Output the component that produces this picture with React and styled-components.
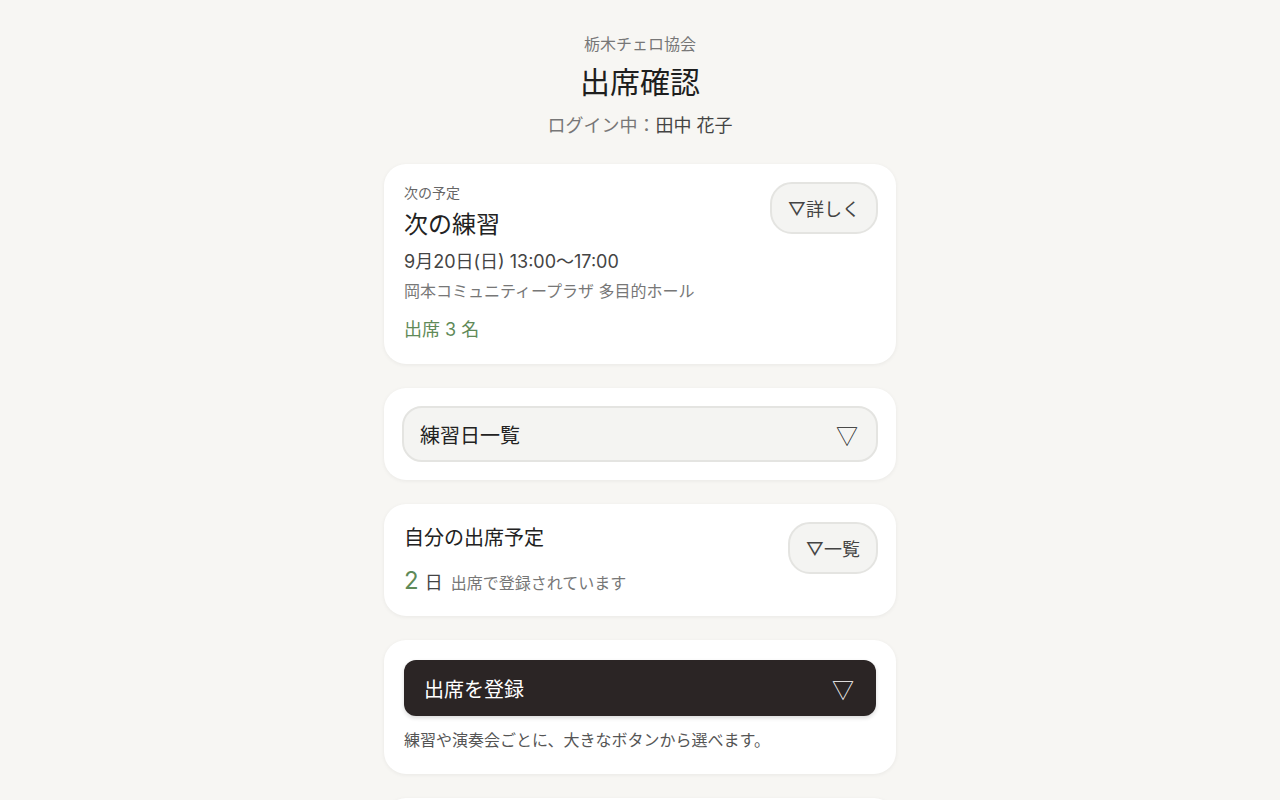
import styled, { createGlobalStyle } from "styled-components";

const GlobalStyle = createGlobalStyle`
  body {
    margin: 0;
    background: #f7f6f3;
    font-family: "Inter", "Noto Sans CJK JP", sans-serif;
    color: #222;
  }
`;

const Page = styled.div`
  width: 512px;
  margin: 0 auto;
  padding: 32px 0 24px;
`;

const Header = styled.header`
  text-align: center;
  margin-bottom: 25px;
`;

const Org = styled.div`
  font-size: 16px;
  line-height: 24px;
  color: #777;
`;

const Title = styled.h1`
  font-size: 30px;
  font-weight: 400;
  line-height: 42px;
  margin: 5px 0 10px;
  color: #1e1e1e;
`;

const Login = styled.div`
  font-size: 18px;
  line-height: 26px;
  color: #777;
  span {
    color: #444;
  }
`;

const Card = styled.section`
  background: #fff;
  border-radius: 22px;
  padding: ${(p) => p.$pad || "20px 20px 21px"};
  box-shadow: 0 1px 4px rgba(0, 0, 0, 0.06);
  margin-bottom: 24px;
`;

const Row = styled.div`
  display: flex;
  justify-content: space-between;
  align-items: flex-start;
`;

const Small = styled.div`
  font-size: 14px;
  line-height: 18px;
  color: #666;
`;

const CardTitle = styled.h2`
  font-size: ${(p) => p.$size || "24px"};
  font-weight: 400;
  line-height: ${(p) => (p.$size ? "28px" : "36px")};
  margin: ${(p) => (p.$size ? "0" : "5px 0 0")};
  color: #222;
`;

const DateText = styled.div`
  font-size: 18px;
  line-height: 26px;
  color: #444;
  margin-top: 6px;
`;

const Venue = styled.div`
  font-size: 16px;
  line-height: 24px;
  color: #777;
  margin-top: 4px;
`;

const Green = styled.div`
  font-size: 18px;
  line-height: 26px;
  color: #5f8a58;
  margin-top: 14px;
`;

const PillButton = styled.button`
  font-family: inherit;
  font-size: 18px;
  color: #444;
  background: #f4f4f2;
  border: 2px solid #e4e4e1;
  border-radius: 22px;
  height: 52px;
  padding: 0 16px;
  margin: -2px -2px 0 0;
  flex-shrink: 0;
`;

const Summary = styled.button`
  width: 100%;
  display: flex;
  align-items: center;
  justify-content: space-between;
  height: 56px;
  font-family: inherit;
  font-size: 20px;
  color: ${(p) => (p.$dark ? "#fff" : "#222")};
  background: ${(p) => (p.$dark ? "#2b2525" : "#f4f4f2")};
  border: ${(p) => (p.$dark ? "none" : "2px solid #e4e4e1")};
  border-radius: ${(p) => (p.$dark ? "12px" : "20px")};
  box-shadow: ${(p) => (p.$dark ? "0 2px 4px rgba(0,0,0,0.15)" : "none")};
  padding: ${(p) => (p.$dark ? "0 22px 0 20px" : "0 18px 0 16px")};
`;

const Arrow = styled.span`
  font-family: "Noto Sans CJK JP", sans-serif;
  font-weight: 300;
  font-size: 22px;
  line-height: 1;
`;

const Count = styled.div`
  margin-top: 14px;
  display: flex;
  align-items: baseline;
  gap: 6px;
`;

const Num = styled.span`
  font-size: 24px;
  line-height: 29px;
  color: #5f8a58;
`;

const Unit = styled.span`
  font-size: 18px;
  color: #444;
  margin-right: 2px;
`;

const Note = styled.span`
  font-size: 16px;
  color: #777;
`;

const Hint = styled.p`
  font-size: 16px;
  line-height: 24px;
  color: #555;
  margin: 12px 0 1px;
`;

export default function App() {
  return (
    <>
      <GlobalStyle />
      <Page>
        <Header>
          <Org>栃木チェロ協会</Org>
          <Title>出席確認</Title>
          <Login>
            ログイン中：<span>田中 花子</span>
          </Login>
        </Header>

        <Card>
          <Row>
            <div>
              <Small>次の予定</Small>
              <CardTitle>次の練習</CardTitle>
              <DateText>9月20日(日) 13:00〜17:00</DateText>
              <Venue>岡本コミュニティープラザ 多目的ホール</Venue>
              <Green>出席 3 名</Green>
            </div>
            <PillButton>▽詳しく</PillButton>
          </Row>
        </Card>

        <Card $pad="18px">
          <Summary>
            <span>練習日一覧</span>
            <Arrow>▽</Arrow>
          </Summary>
        </Card>

        <Card>
          <Row>
            <div>
              <CardTitle $size="20px">自分の出席予定</CardTitle>
              <Count>
                <Num>2</Num>
                <Unit>日</Unit>
                <Note>出席で登録されています</Note>
              </Count>
            </div>
            <PillButton>▽一覧</PillButton>
          </Row>
        </Card>

        <Card>
          <Summary $dark>
            <span>出席を登録</span>
            <Arrow>▽</Arrow>
          </Summary>
          <Hint>練習や演奏会ごとに、大きなボタンから選べます。</Hint>
        </Card>

        <Card>
          <CardTitle $size="20px">&nbsp;</CardTitle>
        </Card>
      </Page>
    </>
  );
}
